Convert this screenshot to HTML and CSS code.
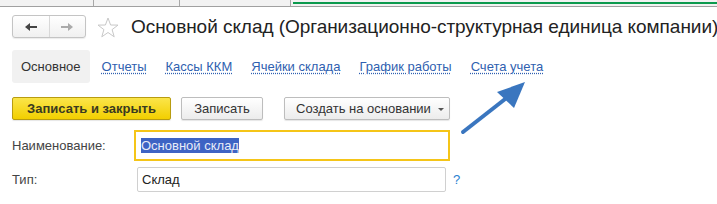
FILE: index.html
```html
<!DOCTYPE html>
<html lang="ru">
<head>
<meta charset="utf-8">
<link rel="stylesheet" href="styles.css">
</head>
<body>
<div class="topstrip">
  <div class="seg s1"></div>
  <div class="seg s2"></div>
  <div class="seg s3"></div>
  <div class="seg s4"><div class="green"></div></div>
</div>
<div class="header">
  <div class="navbox">
    <div class="navbtn"><svg width="14" height="10" viewBox="0 0 14 10"><path d="M1 5 L6 1 L6 4 L13 4 L13 6 L6 6 L6 9 Z" fill="#444"/></svg></div>
    <div class="navbtn"><svg width="14" height="10" viewBox="0 0 14 10"><path d="M13 5 L8 1 L8 4 L1 4 L1 6 L8 6 L8 9 Z" fill="#aaa"/></svg></div>
  </div>
  <svg class="star" width="22" height="21" viewBox="0 0 22 21"><path d="M11 1 L13.6 8 L21 8.1 L15.1 12.6 L17.2 19.8 L11 15.5 L4.8 19.8 L6.9 12.6 L1 8.1 L8.4 8 Z" fill="none" stroke="#c8c8c8" stroke-width="1"/></svg>
  <h1 class="title">Основной склад (Организационно-структурная единица компании)</h1>
</div>
<div class="tabs">
  <div class="tab active">Основное</div>
  <a class="tab link">Отчеты</a>
  <a class="tab link">Кассы ККМ</a>
  <a class="tab link">Ячейки склада</a>
  <a class="tab link">График работы</a>
  <a class="tab link">Счета учета</a>
</div>
<div class="toolbar">
  <div class="btn primary">Записать и закрыть</div>
  <div class="btn save">Записать</div>
  <div class="btn menu">Создать на основании <span class="caret"></span></div>
</div>
<div class="form">
  <div class="row">
    <div class="label">Наименование:</div>
    <div class="input focused"><span class="sel">Основной склад</span></div>
  </div>
  <div class="row">
    <div class="label type">Тип:</div>
    <div class="input plain">Склад</div>
    <div class="help">?</div>
  </div>
</div>
<svg class="arrow" width="80" height="60" viewBox="0 0 80 60"><line x1="4" y1="54" x2="50" y2="18" stroke="#3a76bf" stroke-width="4" stroke-linecap="round"/><path d="M66 4 L38 14 L55 30 Z" fill="#3a76bf"/></svg>
</body>
</html>
```
FILE: styles.css
```css
* { box-sizing: border-box; }
body {
  margin: 0;
  width: 717px;
  height: 204px;
  overflow: hidden;
  background: #fff;
  font-family: "Liberation Sans", Arial, sans-serif;
  color: #333;
  position: relative;
}
.topstrip {
  display: flex;
  height: 7px;
  background: #f2f2f2;
  border-bottom: 1px solid #a0a0a0;
}
.seg { height: 6px; border-right: 1px solid #a8a8a8; flex-shrink: 0; }
.s1 { width: 94px; }
.s2 { width: 86px; }
.s3 { width: 111px; }
.s4 { flex: 1; border-right: none; padding-left: 2px; padding-top: 2px; }
.green { height: 2px; background: #0c9a4e; }
.header {
  display: flex;
  align-items: center;
  height: 38px;
  padding-left: 12px;
  padding-top: 1px;
}
.navbox {
  display: flex;
  flex-shrink: 0;
  width: 74px;
  height: 23px;
  border: 1px solid #c4c4c4;
  border-radius: 3px;
  background: linear-gradient(#ffffff, #f0f0f0);
  box-shadow: 0 1px 1px rgba(0,0,0,0.08);
}
.navbtn {
  flex: 1;
  display: flex;
  align-items: center;
  justify-content: center;
}
.navbtn + .navbtn { border-left: 1px solid #d8d8d8; }
.star { margin-left: 11px; margin-top: 1px; flex-shrink: 0; }
.title {
  margin: 0 0 0 12px;
  font-weight: normal;
  font-size: 19px;
  color: #222;
  white-space: nowrap;
  letter-spacing: -0.05px;
}
.tabs {
  display: flex;
  align-items: center;
  margin-top: 5px;
  padding-left: 12px;
  height: 33px;
  font-size: 13px;
}
.tab { margin-right: 19px; }
.tab.active {
  background: #f1f1f1;
  border-radius: 3px;
  height: 33px;
  line-height: 33px;
  padding: 0 9px;
  margin-right: 12px;
  color: #333;
}
.tab.link {
  color: #2f5fb0;
  text-decoration: underline dotted #2f5fb0;
  text-underline-offset: 2px;
}
.toolbar {
  display: flex;
  padding-left: 12px;
  margin-top: 14px;
  gap: 10px;
}
.btn {
  height: 23px;
  line-height: 21px;
  border: 1px solid #bdbdbd;
  border-radius: 2px;
  background: linear-gradient(#ffffff, #ececec);
  font-size: 13px;
  color: #333;
  padding: 0 14px;
  box-shadow: 0 1px 1px rgba(0,0,0,0.1);
  white-space: nowrap;
}
.btn.primary {
  width: 159px;
  text-align: center;
  padding: 0;
  background: linear-gradient(#fbe54a, #f2cf00);
  border-color: #b89c10;
  font-weight: bold;
  color: #3a3a20;
}
.btn.save { width: 82px; text-align: center; padding: 0; }
.btn.menu { margin-left: 11px; width: 166px; padding: 0 0 0 11px; }
.caret {
  display: inline-block;
  width: 0; height: 0;
  border-left: 3px solid transparent;
  border-right: 3px solid transparent;
  border-top: 3px solid #555;
  vertical-align: middle;
  margin-left: 4px;
}
.form { margin-top: 10px; padding-left: 12px; }
.row { display: flex; align-items: center; }
.label { width: 122px; font-size: 13px; color: #444; flex-shrink: 0; }
.label.type { width: 125px; }
.input {
  font-size: 13px;
  color: #222;
  flex-shrink: 0;
}
.input.focused {
  width: 316px;
  height: 31px;
  border: 2px solid #f5c518;
  padding-left: 5px;
  display: flex;
  align-items: center;
}
.sel { background: #3d63c4; color: #e8ecf8; }
.row + .row { margin-top: 6px; }
.input.plain {
  width: 309px;
  height: 25px;
  border: 1px solid #d0d0d0;
  border-radius: 2px;
  padding-left: 4px;
  line-height: 23px;
}
.help { margin-left: 7px; color: #2a7fcf; font-size: 13px; }
.arrow { position: absolute; left: 459px; top: 78px; }
```
